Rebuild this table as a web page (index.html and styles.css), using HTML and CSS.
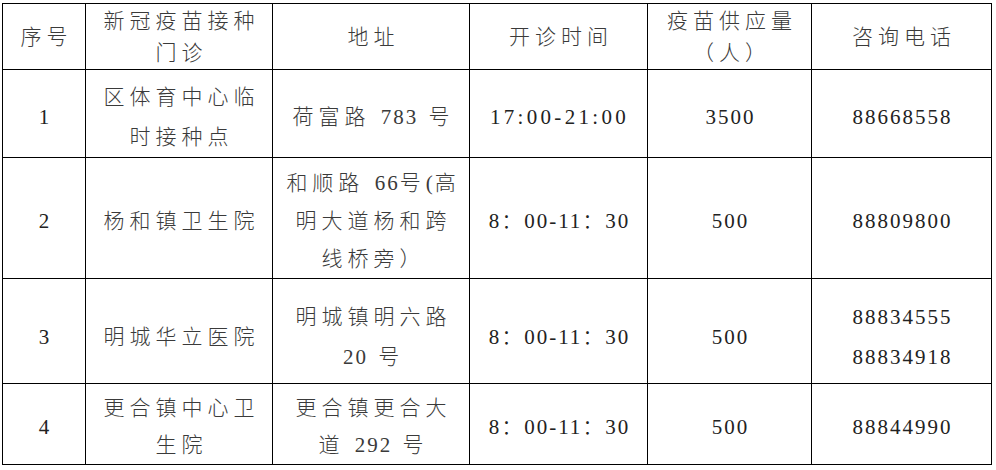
FILE: index.html
```html
<!DOCTYPE html>
<html lang="zh-CN">
<head>
<meta charset="utf-8">
<title>新冠疫苗接种门诊</title>
<link rel="stylesheet" href="styles.css">
</head>
<body>
<table class="grid">
  <colgroup>
    <col class="c1"><col class="c2"><col class="c3"><col class="c4"><col class="c5"><col class="c6">
  </colgroup>
  <thead>
    <tr class="r0">
      <th>序号</th>
      <th>新冠疫苗接种<br>门诊</th>
      <th>地址</th>
      <th>开诊时间</th>
      <th>疫苗供应量<br>（人）</th>
      <th>咨询电话</th>
    </tr>
  </thead>
  <tbody>
    <tr class="r1">
      <td class="num">1</td>
      <td>区体育中心临<br>时接种点</td>
      <td>荷富路 <span class="n">783</span> 号</td>
      <td class="num time">17:00-21:00</td>
      <td class="num">3500</td>
      <td class="num">88668558</td>
    </tr>
    <tr class="r2">
      <td class="num">2</td>
      <td>杨和镇卫生院</td>
      <td>和顺路 <span class="n">66</span>号<span class="n">(</span>高<br>明大道杨和跨<br>线桥旁）</td>
      <td class="num">8：00-11：30</td>
      <td class="num">500</td>
      <td class="num">88809800</td>
    </tr>
    <tr class="r3">
      <td class="num">3</td>
      <td>明城华立医院</td>
      <td>明城镇明六路<br><span class="n">20</span> 号</td>
      <td class="num">8：00-11：30</td>
      <td class="num">500</td>
      <td class="num">88834555<br>88834918</td>
    </tr>
    <tr class="r4">
      <td class="num">4</td>
      <td>更合镇中心卫<br>生院</td>
      <td>更合镇更合大<br>道 <span class="n">292</span> 号</td>
      <td class="num">8：00-11：30</td>
      <td class="num">500</td>
      <td class="num">88844990</td>
    </tr>
  </tbody>
</table>
</body>
</html>
```
FILE: styles.css
```css
html, body {
  margin: 0;
  padding: 0;
  background: #fff;
}
body {
  padding: 3px 0 0 2px;
}
.grid {
  border-collapse: collapse;
  table-layout: fixed;
  width: 990px;
  font-family: "Liberation Serif", "Noto Sans CJK SC", serif;
  font-size: 21px;
  color: #3a3a3a;
}
.c1 { width: 83px; }
.c2 { width: 187px; }
.c3 { width: 197px; }
.c4 { width: 178px; }
.c5 { width: 164px; }
.c6 { width: 180px; }
.grid th,
.grid td {
  border: 1px solid #000;
  padding: 0 0 0 5px;
  text-align: center;
  vertical-align: middle;
  white-space: nowrap;
  font-weight: 300;
  letter-spacing: 5px;
}
.grid th {
  line-height: 32px;
  padding-top: 1px;
}
.grid td {
  line-height: 40px;
}
.grid .n {
  letter-spacing: 2px;
}
.grid td.num {
  letter-spacing: 2px;
  padding-left: 2px;
  color: #222;
}
.grid td.time {
  letter-spacing: 3.3px;
}
.r0 { height: 65px; }
.r1 { height: 87px; }
.r1 td { padding-top: 7px; }
.r2 { height: 120px; }
.r2 td { line-height: 38px; padding-top: 6px; }
.r3 { height: 105px; }
.r3 td { padding-top: 11px; }
.r4 { height: 80px; }
.r4 td { line-height: 37px; padding-top: 6px; }
```
